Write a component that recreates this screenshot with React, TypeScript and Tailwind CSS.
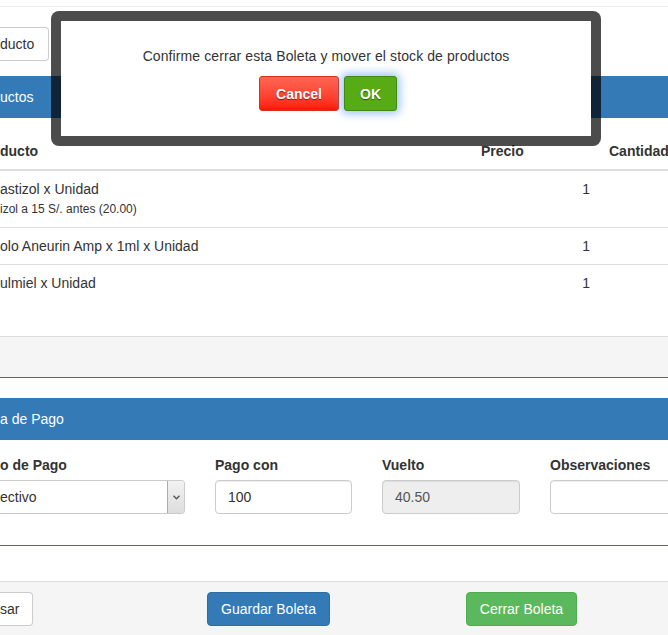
export default function App() {
  return (
    <div className="relative h-[635px] w-[668px] overflow-hidden bg-white font-['Liberation_Sans',Arial,sans-serif] text-[14px] leading-5 text-[#333]">
      <div className="h-[7px] border-b border-[#eee]" />

      {/* top toolbar */}
      <div className="mt-[20px] flex">
        <button className="h-[34px] w-[49px] rounded-r-[4px] border-y border-r border-[#ccc] bg-white pr-3 text-left">
          ducto
        </button>
      </div>

      {/* products panel */}
      <div className="mt-[15px] border-b border-[#3a6f9e]">
        <div className="h-[42px] bg-[#337ab7] py-[11px] text-white">uctos</div>
        <div className="pt-[15px] pb-[35px]">
          <div className="grid grid-cols-[473px_128px_1fr] border-b-2 border-[#ddd] py-2 font-bold">
            <div>ducto</div>
            <div className="pl-2">Precio</div>
            <div className="pl-2 whitespace-nowrap">Cantidad</div>
          </div>
          <div className="grid grid-cols-[473px_128px_1fr] py-2">
            <div>
              <div>astizol x Unidad</div>
              <div className="text-[12px]">izol a 15 S/. antes (20.00)</div>
            </div>
            <div className="pr-[11px] text-right">1</div>
            <div />
          </div>
          <div className="grid grid-cols-[473px_128px_1fr] border-t border-[#ddd] py-2">
            <div>olo Aneurin Amp x 1ml x Unidad</div>
            <div className="pr-[11px] text-right">1</div>
            <div />
          </div>
          <div className="grid grid-cols-[473px_128px_1fr] border-t border-[#ddd] py-2">
            <div>ulmiel x Unidad</div>
            <div className="pr-[11px] text-right">1</div>
            <div />
          </div>
        </div>
        <div className="h-[41px] border-t border-[#ddd] bg-[#f5f5f5]" />
      </div>

      {/* payment panel */}
      <div className="mt-[20px] border-b border-[#3a6f9e]">
        <div className="h-[42px] bg-[#337ab7] py-[11px] text-white">a de Pago</div>
        <div className="grid grid-cols-[185px_137px_138px_1fr] gap-x-[30px] pt-[15px] pb-[31px]">
          <div>
            <div className="mb-[5px] font-bold">o de Pago</div>
            <div className="flex h-[34px] items-stretch rounded-r-[4px] border-y border-r border-[#ccc] bg-white">
              <div className="flex-1 py-[6px]">ectivo</div>
              <div className="flex w-[17px] items-center justify-center rounded-r-[3px] border-l border-[#acacac] bg-gradient-to-b from-[#f2f2f2] to-[#dddddd]">
                <svg width="7" height="5" viewBox="0 0 7 5">
                  <path d="M0.5 0.8 L3.5 3.8 L6.5 0.8" fill="none" stroke="#555" strokeWidth="1.3" />
                </svg>
              </div>
            </div>
          </div>
          <div>
            <div className="mb-[5px] font-bold">Pago con</div>
            <div className="h-[34px] rounded-[4px] border border-[#ccc] bg-white px-3 py-[6px] shadow-[inset_0_1px_1px_rgba(0,0,0,0.075)]">
              100
            </div>
          </div>
          <div>
            <div className="mb-[5px] font-bold">Vuelto</div>
            <div className="h-[34px] rounded-[4px] border border-[#ccc] bg-[#eee] px-3 py-[6px] text-[#555] shadow-[inset_0_1px_1px_rgba(0,0,0,0.075)]">
              40.50
            </div>
          </div>
          <div>
            <div className="mb-[5px] font-bold">Observaciones</div>
            <div className="h-[34px] w-[150px] rounded-[4px] border border-[#ccc] bg-white shadow-[inset_0_1px_1px_rgba(0,0,0,0.075)]" />
          </div>
        </div>
      </div>

      {/* footer actions */}
      <div className="mt-[35px] h-[60px] border-t border-[#ddd] bg-[#f5f5f5] pt-[10px]">
        <div className="flex">
          <button className="h-[34px] w-[33px] rounded-r-[4px] border-y border-r border-[#ccc] bg-white text-left">
            sar
          </button>
          <button className="ml-[174px] h-[34px] w-[123px] rounded-[4px] border border-[#2e6da4] bg-[#337ab7] text-white">
            Guardar Boleta
          </button>
          <button className="ml-[136px] h-[34px] w-[111px] rounded-[4px] border border-[#4cae4c] bg-[#5cb85c] text-white">
            Cerrar Boleta
          </button>
        </div>
      </div>

      {/* confirm dialog */}
      <div className="absolute left-[51px] top-[11px] h-[135px] w-[550px] rounded-[8px] border-[10px] border-[rgba(0,0,0,0.7)] bg-white bg-clip-padding">
        <div className="pt-[25px] text-center tracking-[0.1px]">Confirme cerrar esta Boleta y mover el stock de productos</div>
        <div className="mt-[10px] flex justify-center gap-[5px] pl-[4px]">
          <button className="h-[35px] w-[80px] rounded-[3px] border border-[#d9301e] bg-gradient-to-b from-[#ff6553] to-[#ff1300] font-bold text-white [text-shadow:0_1px_1px_rgba(0,0,0,0.5)]">
            Cancel
          </button>
          <button className="h-[35px] w-[53px] rounded-[3px] border border-[#3f8a10] bg-[#57ab14] font-bold text-white shadow-[0_0_8px_3px_rgba(82,150,236,0.55)] [text-shadow:0_1px_1px_rgba(0,0,0,0.5)]">
            OK
          </button>
        </div>
      </div>
    </div>
  );
}
